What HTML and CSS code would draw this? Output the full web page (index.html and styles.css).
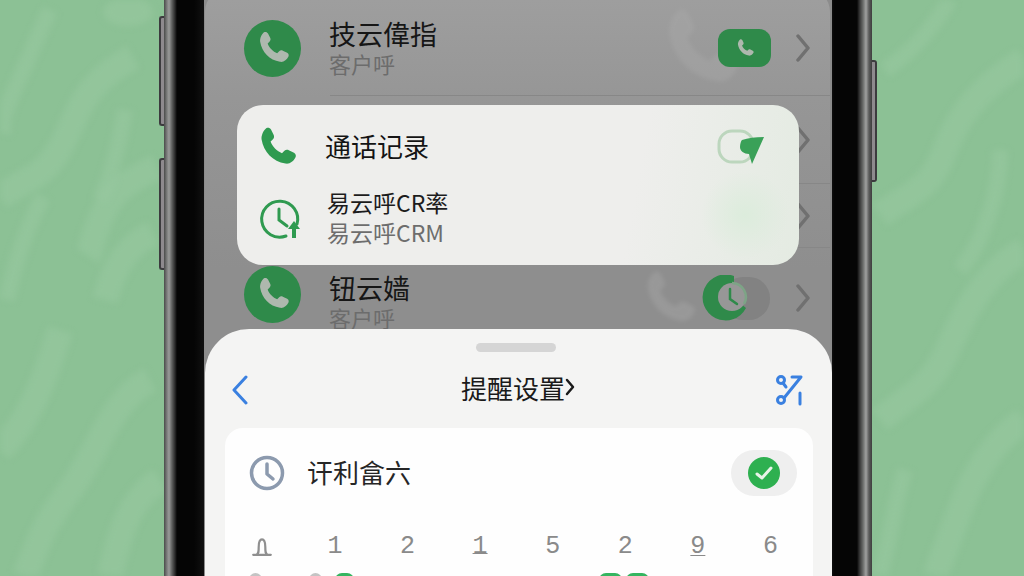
FILE: index.html
```html
<!DOCTYPE html>
<html lang="zh-CN">
<head>
  <meta charset="UTF-8">
  <title>提醒设置</title>
  <link rel="stylesheet" href="styles.css">
</head>
<body>
  <svg class="backdrop" viewBox="0 0 1024 576" width="1024" height="576">
    <g class="streak wide">
      <path d="M133 57C110 70 90 85 77 113S55 165 33 177 10 190 0 197"/>
      <path d="M157 167C130 180 112 190 100 220S92 250 88 256"/>
      <path d="M153 233C130 245 115 262 105 300"/>
      <path d="M60 330C45 380 30 420 0 450"/>
      <path d="M150 380C110 400 100 450 70 490S40 540 25 576"/>
      <path d="M160 480C130 500 120 530 110 576"/>
      <path d="M1024 60C985 85 960 110 945 150S915 190 880 215"/>
      <path d="M1024 250C990 270 970 300 950 345S915 390 880 420"/>
      <path d="M1024 420C995 440 975 470 960 510S945 550 935 576"/>
    </g>
    <g class="streak">
      <path d="M50 10C40 30 28 60 13 93S5 125 3 133"/>
      <path d="M43 197C30 220 15 260 7 300"/>
      <path d="M125 110C118 150 110 180 100 200"/>
      <path d="M950 0C930 30 915 50 885 70"/>
      <path d="M1000 150C1000 190 985 240 960 270"/>
      <path d="M905 470C895 500 890 540 880 576"/>
    </g>
    <ellipse class="blob" cx="128" cy="12" rx="25" ry="14"/>
  </svg>

  <div class="phone">
    <span class="side-btn btn-a"></span>
    <span class="side-btn btn-b"></span>
    <span class="side-btn btn-c"></span>

    <div class="screen">
      <div class="list-card">
        <div class="list-row first">
          <span class="call-badge">
            <svg viewBox="0 0 24 24" width="40" height="40"><path class="ph-fill" d="M6.600 2.600c.9-.5 1.900-.2 2.400.7l1.300 2.600c.4.8.3 1.600-.3 2.200L8.800 9.300c.7 2.400 3.300 5 5.700 5.800l1.200-1.200c.6-.6 1.500-.7 2.200-.3l2.600 1.300c.9.500 1.200 1.600.7 2.400-1 1.900-2.800 3.400-5 3-6.300-1-10.900-5.700-11.900-12-.3-2.200 1-4.700 2.300-5.700z"/></svg>
          </span>
          <div class="row-text raised-text">
            <div class="row-name">技云偉指</div>
            <div class="row-sub">客户呼</div>
          </div>
          <span class="call-pill">
            <svg viewBox="0 0 24 24" width="22" height="22"><path class="ph-fill" d="M6.600 2.600c.9-.5 1.900-.2 2.400.7l1.300 2.600c.4.8.3 1.600-.3 2.200L8.800 9.300c.7 2.400 3.300 5 5.700 5.800l1.200-1.200c.6-.6 1.500-.7 2.200-.3l2.600 1.300c.9.500 1.200 1.600.7 2.400-1 1.900-2.800 3.400-5 3-6.300-1-10.900-5.700-11.900-12-.3-2.200 1-4.700 2.300-5.700z"/></svg>
          </span>
          <svg class="chev" viewBox="0 0 14 28" width="14" height="28"><path d="M2 2l10 12L2 26"/></svg>
        </div>
        <div class="list-row covered tall">
          <svg class="chev" viewBox="0 0 14 28" width="14" height="28"><path d="M2 2l10 12L2 26"/></svg>
        </div>
        <div class="list-row covered">
          <svg class="chev" viewBox="0 0 14 28" width="14" height="28"><path d="M2 2l10 12L2 26"/></svg>
        </div>
        <div class="list-row last">
          <span class="call-badge raised">
            <svg viewBox="0 0 24 24" width="40" height="40"><path class="ph-fill" d="M6.600 2.600c.9-.5 1.900-.2 2.400.7l1.300 2.600c.4.8.3 1.600-.3 2.200L8.800 9.300c.7 2.400 3.300 5 5.700 5.800l1.200-1.200c.6-.6 1.500-.7 2.200-.3l2.600 1.300c.9.500 1.200 1.600.7 2.400-1 1.900-2.800 3.400-5 3-6.300-1-10.900-5.700-11.900-12-.3-2.200 1-4.700 2.300-5.700z"/></svg>
          </span>
          <div class="row-text lowered">
            <div class="row-name">钮云嫱</div>
            <div class="row-sub">客户呼</div>
          </div>
          <span class="clock-toggle">
            <svg viewBox="0 0 70 46" width="70" height="46">
              <rect x="20" y="2" width="48" height="43" rx="21" fill="#828282"/>
              <path d="M32 1A23 23 0 1 0 44 33L32 23z" fill="#2f8a4a"/>
              <circle cx="30" cy="22" r="14" fill="#979797"/>
              <path d="M30 8a14 14 0 0 1 12 21" fill="none" stroke="#7da486" stroke-width="2.500"/>
              <path d="M28 14v10l7 5" fill="none" stroke="#2f8a4a" stroke-width="2.500" stroke-linecap="round"/>
            </svg>
          </span>
          <svg class="chev" viewBox="0 0 14 28" width="14" height="28"><path d="M2 2l10 12L2 26"/></svg>
        </div>
      </div>

      <svg class="ghost ghost-a" viewBox="0 0 24 24" width="96" height="96"><path d="M6.600 2.600c.9-.5 1.900-.2 2.400.7l1.300 2.600c.4.8.3 1.600-.3 2.200L8.800 9.300c.7 2.400 3.300 5 5.700 5.800l1.200-1.200c.6-.6 1.500-.7 2.200-.3l2.600 1.300c.9.500 1.200 1.600.7 2.400-1 1.900-2.800 3.400-5 3-6.300-1-10.900-5.700-11.900-12-.3-2.200 1-4.700 2.300-5.700z"/></svg>
      <svg class="ghost ghost-b" viewBox="0 0 24 24" width="66" height="66"><path d="M6.600 2.600c.9-.5 1.900-.2 2.400.7l1.300 2.600c.4.8.3 1.600-.3 2.200L8.800 9.300c.7 2.400 3.300 5 5.700 5.800l1.200-1.200c.6-.6 1.500-.7 2.200-.3l2.600 1.300c.9.500 1.200 1.600.7 2.400-1 1.900-2.800 3.400-5 3-6.300-1-10.900-5.700-11.900-12-.3-2.200 1-4.700 2.300-5.700z"/></svg>

      <div class="popup">
        <div class="popup-row">
          <svg class="popup-icon phone-icon" viewBox="0 0 24 24" width="48" height="48"><path fill="#2f9a50" d="M6.600 2.600c.9-.5 1.900-.2 2.400.7l1.300 2.600c.4.8.3 1.600-.3 2.200L8.800 9.300c.7 2.400 3.300 5 5.700 5.800l1.200-1.200c.6-.6 1.500-.7 2.200-.3l2.600 1.300c.9.500 1.200 1.600.7 2.400-1 1.900-2.800 3.400-5 3-6.300-1-10.900-5.700-11.900-12-.3-2.200 1-4.700 2.300-5.700z"/></svg>
          <div class="popup-title">通话记录</div>
          <svg class="popup-toggle" viewBox="0 0 48 36" width="48" height="36">
            <rect x="2" y="2" width="34" height="31" rx="13" fill="none" stroke="#bcd6bd" stroke-width="3"/>
            <path fill="#3aa158" d="M25 11c6-2 13-3 22-3l-12 27-3-10c-5 0-9-3-9-7 0-3 1-6 2-7z"/>
          </svg>
        </div>
        <div class="popup-row second">
          <svg class="popup-icon clock-up" viewBox="0 0 44 44" width="44" height="44">
            <path d="M38 27a18 18 0 1 0-11 12" fill="none" stroke="#2f9a50" stroke-width="3" stroke-linecap="round"/>
            <path d="M20 12v11l8 6" fill="none" stroke="#2f9a50" stroke-width="3" stroke-linecap="round"/>
            <path d="M35 24l6 8h-4v9h-4v-9h-4z" fill="#2f9a50"/>
          </svg>
          <div class="row-text">
            <div class="popup-name">易云呼CR率</div>
            <div class="popup-sub">易云呼CRM</div>
          </div>
        </div>
      </div>

      <div class="sheet">
        <div class="grabber"></div>
        <div class="sheet-head">
          <svg class="back" viewBox="0 0 18 30" width="18" height="30"><path d="M15 2L3 15l12 13"/></svg>
          <div class="sheet-title">提醒设置<svg class="title-chev" viewBox="0 0 10 18" width="10" height="18"><path d="M2 2l6 7-6 7"/></svg></div>
          <svg class="route" viewBox="0 0 30 32" width="30" height="32">
            <circle cx="6" cy="6" r="3.500"/>
            <path d="M8 9l3 4"/>
            <circle cx="6" cy="26" r="3.500"/>
            <path d="M9 24L26 3H17"/>
            <path d="M25 19v11"/>
          </svg>
        </div>
        <div class="panel">
          <div class="panel-row">
            <svg class="panel-clock" viewBox="0 0 36 36" width="36" height="36">
              <circle cx="18" cy="18" r="15.500"/>
              <path d="M18 9v10l6 5"/>
            </svg>
            <div class="panel-label">讦利畣六</div>
            <span class="check-wrap">
              <svg viewBox="0 0 32 32" width="32" height="32">
                <circle cx="16" cy="16" r="16" fill="#2eb050"/>
                <path d="M9 17l5 4 9-10" fill="none" stroke="#e8f3e8" stroke-width="3" stroke-linecap="round" stroke-linejoin="round"/>
              </svg>
            </span>
          </div>
          <div class="digits">
            <span><svg class="bell" viewBox="0 0 20 20" width="22" height="22"><path d="M2 18h16M5 18c2-1 2-3 2-7 0-4 1-7 3-7s3 3 3 7c0 4 0 6 2 7"/></svg></span>
            <span>1</span>
            <span>2</span>
            <span class="under">1</span>
            <span>5</span>
            <span>2</span>
            <span class="under low">9</span>
            <span>6</span>
          </div>
          <div class="slivers">
            <span class="sl gray"></span>
            <span class="sl gray gap-a"></span>
            <span class="sl green gap-b"></span>
            <span class="sl green gap-c"></span>
            <span class="sl green gap-d"></span>
          </div>
        </div>
      </div>
    </div>
  </div>
</body>
</html>
```

FILE: styles.css
```css
html, body {
  margin: 0;
  height: 100%;
  overflow: hidden;
}

body {
  background-color: #8cc195;
  font-family: "Noto Sans CJK SC", "Liberation Sans", sans-serif;
  display: flex;
  justify-content: center;
  align-items: flex-start;
}

.backdrop {
  position: absolute;
  left: 0;
  top: 0;
  filter: blur(3px);
}

.streak path {
  fill: none;
  stroke: #9acaa2;
  stroke-width: 16;
  stroke-linejoin: round;
  opacity: 0.5;
}

.streak.wide path { stroke-width: 26; }

.blob { fill: #93c59b; }

.phone {
  position: relative;
  width: 628px;
  height: 576px;
  padding: 0 40px;
  margin-left: 12px;
  flex: none;
  background: linear-gradient(90deg, #4a4b4a 0, #7d7e7d 3px, #9a9b9a 5px, #5e5f5e 8px, #2a2a2a 11px, #050505 13px, #050505 30px, #101010 40px, #101010 calc(100% - 40px), #050505 calc(100% - 38px), #050505 calc(100% - 15px), #2c2c2c calc(100% - 13px), #6a6c6a calc(100% - 9px), #a0a1a0 calc(100% - 6px), #5a5b5a calc(100% - 3px), #3f3f3f 100%);
}

.side-btn {
  position: absolute;
  width: 3px;
  border: 2px solid #3c3b3e;
  border-right: none;
  background: #8e8a8e;
  border-radius: 3px 0 0 3px;
}

.btn-a { left: -5px; top: 16px; height: 106px; }
.btn-b { left: -5px; top: 158px; height: 108px; }
.btn-c { right: -5px; top: 60px; height: 118px; transform: scaleX(-1); }

.screen {
  position: relative;
  height: 576px;
  overflow: hidden;
  background: #8c8c8c;
}

.list-card {
  margin: -12px 2px 0 1px;
  padding: 0 20px 0 40px;
  background: linear-gradient(180deg, #9f9f9f 0, #969696 110px, #8e8e8e 280px);
  border-radius: 24px;
}

.list-row {
  position: relative;
  display: flex;
  align-items: center;
  height: 64px;
  box-sizing: border-box;
  margin-left: -1px;
}

/* separator only runs under the text, not the badge */
.list-row::after {
  content: "";
  position: absolute;
  left: 86px;
  right: -20px;
  bottom: 0;
  height: 1px;
  background: #878787;
}

.list-row.first {
  height: 108px;
  padding-top: 12px;
}

.list-row.covered { justify-content: flex-end; }
.list-row.tall { height: 88px; }

.list-row.last {
  height: 120px;
  padding-bottom: 20px;
}

.list-row.last::after { display: none; }

.call-badge {
  width: 57px;
  height: 57px;
  border-radius: 50%;
  background: #2f8a4a;
  display: flex;
  align-items: center;
  justify-content: center;
  flex: none;
}

.call-badge.raised { margin-top: -8px; }

.ph-fill { fill: #aeb8ae; }

.row-text {
  flex: 1;
  min-width: 0;
}

.list-row .row-text { margin-left: 28px; }
.list-row .row-text.raised-text { margin-top: -2px; }
.list-row .row-text.lowered { margin-top: 7px; }

.row-name {
  font-size: 27px;
  line-height: 31px;
  color: #161616;
}

.row-sub {
  font-size: 22px;
  line-height: 28px;
  color: #6c6c6c;
}

.call-pill {
  position: relative;
  z-index: 1;
  width: 53px;
  height: 38px;
  border-radius: 12px;
  background: #2f8a4a;
  display: flex;
  align-items: center;
  justify-content: center;
  margin-right: 25px;
}

.clock-toggle {
  position: relative;
  z-index: 1;
  display: flex;
  margin-right: 24px;
}

.chev {
  fill: none;
  stroke: #707070;
  stroke-width: 3.500;
  stroke-linecap: round;
  stroke-linejoin: round;
  flex: none;
}

.ghost {
  position: absolute;
  fill: #adadad;
  opacity: 0.35;
  filter: blur(2px);
}

.ghost-a { left: 448px; top: 0; }
.ghost-b { left: 432px; top: 265px; }

.popup {
  position: absolute;
  left: 33px;
  top: 105px;
  width: 562px;
  height: 160px;
  box-sizing: border-box;
  padding: 19px 34px 0 20px;
  border-radius: 26px;
  background:
    radial-gradient(circle at 508px 110px, #dcecdc 0, rgba(238,240,236,0) 44px),
    linear-gradient(100deg, #eeeeec 70%, #e4ebe2 100%);
}

.popup-row {
  display: flex;
  align-items: center;
  height: 46px;
}

.popup-row.second {
  margin-top: 17px;
  height: 60px;
}

.popup-icon { flex: none; }
.phone-icon { margin: 0 -2px 0 -4px; }
.clock-up { margin: 4px 0 0 2px; }

.popup-title {
  flex: 1;
  margin: -4px 0 0 26px;
  font-size: 26px;
  color: #141414;
}

.second .row-text { margin-left: 24px; }

.popup-name {
  font-size: 23px;
  line-height: 30px;
  color: #1c1c1c;
}

.popup-sub {
  font-size: 23px;
  line-height: 30px;
  color: #6d6d6d;
}

.sheet {
  position: absolute;
  left: 1px;
  right: 0;
  top: 329px;
  bottom: 0;
  z-index: 2;
  padding: 0 19px 0 20px;
  border-radius: 44px 44px 0 0;
  background: #f4f4f3;
}

.grabber {
  width: 80px;
  height: 9px;
  margin: 14px 0 0 251px;
  border-radius: 5px;
  background: #d5d5d5;
}

.sheet-head {
  display: flex;
  align-items: center;
  justify-content: space-between;
  height: 50px;
  margin-top: 13px;
  padding: 0 8px 0 6px;
}

.sheet-title {
  display: flex;
  align-items: center;
  font-size: 26px;
  color: #1a1a1a;
  margin: -6px 0 0 12px;
}

.title-chev {
  fill: none;
  stroke: #1a1a1a;
  stroke-width: 2.500;
  stroke-linecap: round;
  stroke-linejoin: round;
}

.back,
.route {
  fill: none;
  stroke: #3a80e0;
  stroke-width: 3;
  stroke-linecap: round;
  stroke-linejoin: round;
}

.panel {
  margin-top: 13px;
  padding: 0 16px 0 24px;
  height: 200px;
  border-radius: 18px 18px 0 0;
  background: #fefefe;
}

.panel-row {
  display: flex;
  align-items: center;
  height: 90px;
}

.panel-clock {
  fill: none;
  stroke: #8c9aae;
  stroke-width: 3.500;
  stroke-linecap: round;
  stroke-linejoin: round;
  flex: none;
}

.panel-label {
  flex: 1;
  margin: -3px 0 0 22px;
  font-size: 26px;
  color: #262626;
}

.check-wrap {
  width: 66px;
  height: 46px;
  border-radius: 23px;
  background: #efefef;
  display: flex;
  align-items: center;
  justify-content: center;
}

.digits {
  display: grid;
  grid-template-columns: repeat(8, 72.6px);
  margin: 14px 0 0 -23px;
  font-family: "Liberation Mono", monospace;
  font-size: 25px;
  line-height: 30px;
  color: #8a8a8a;
}

.digits span {
  display: flex;
  justify-content: center;
  align-items: center;
}

.digits .under {
  text-decoration: underline;
  text-decoration-thickness: 1px;
  text-decoration-skip-ink: none;
  text-underline-offset: 0;
}

.digits .under.low { text-underline-offset: 2px; }

.bell {
  margin-top: -2px;
  fill: none;
  stroke: #8f8f8f;
  stroke-width: 2;
  stroke-linecap: round;
  stroke-linejoin: round;
}

.slivers {
  display: flex;
  margin-top: 11px;
}

.sl {
  width: 13px;
  height: 14px;
  border-radius: 7px;
}

.sl.gray { background: #c4c4c4; }
.sl.green { background: #34b560; width: 23px; border-radius: 8px; }
.gap-a { margin-left: 47px; }
.sl.gap-b { margin-left: 13px; width: 19px; }
.gap-c { margin-left: 245px; }
.gap-d { margin-left: 4px; }
```
